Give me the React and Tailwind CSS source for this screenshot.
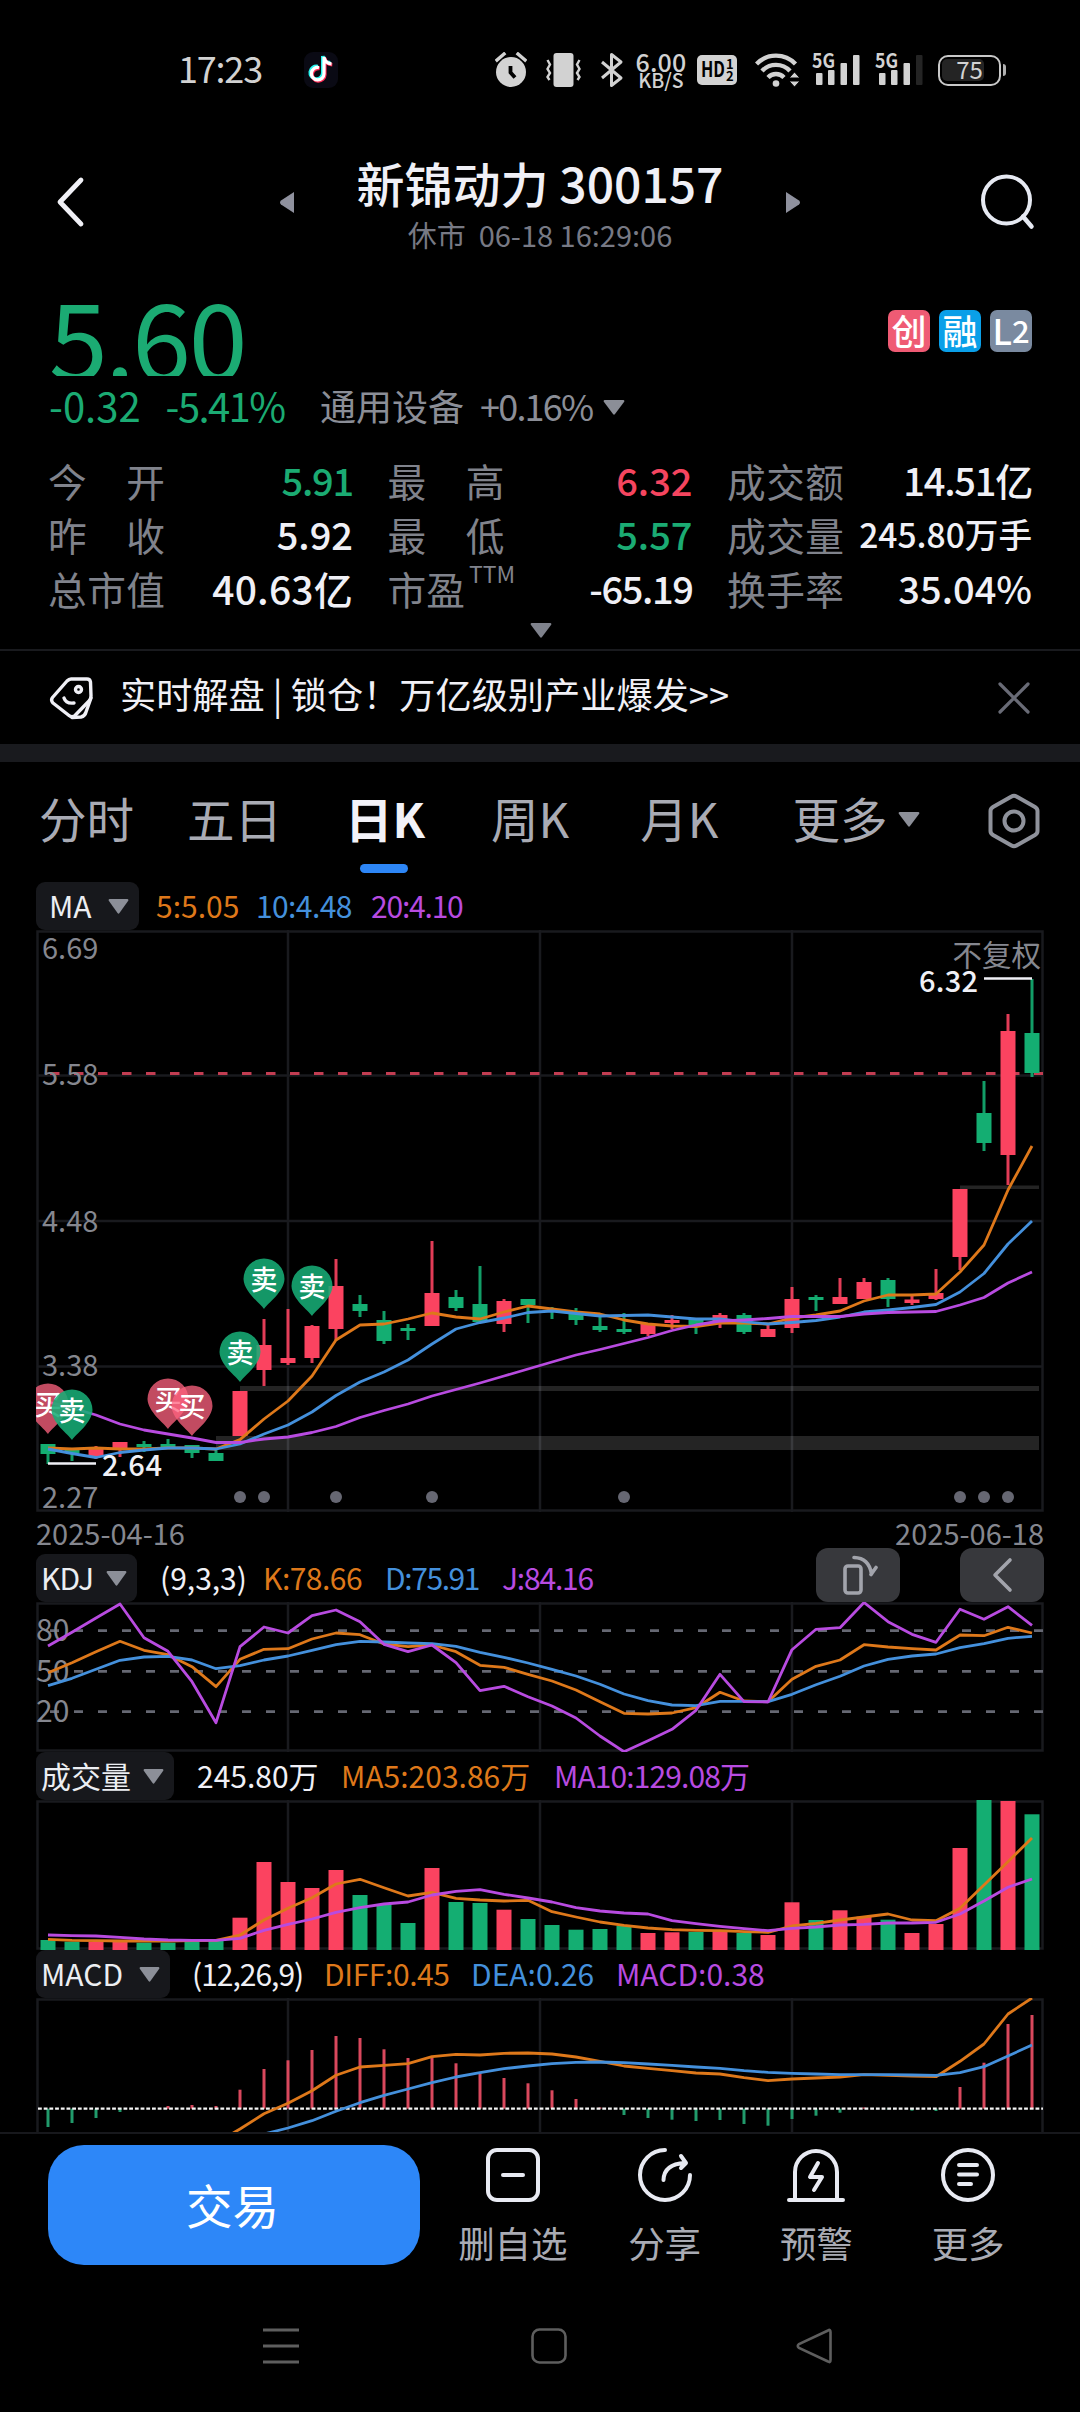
import React from 'react';
import { clsx } from 'clsx';

const RED = '#fb4360';
const GREEN = '#14ae72';
const ORANGE = '#de781a';
const BLUE = '#4490dc';
const PURPLE = '#b84be0';
const GRID = '#191a1e';
const MUTED = '#85878f';

// x position of the candle at index i
const cx = (i) => 48 + i * 24;

// --- DATA ---
// [up, wickTop, bodyTop, bodyBottom, wickBottom]
const candles = [
  [0, 514, 514, 524, 534], [0, 519, 520, 523, 531], [1, 516, 519, 526, 529], [1, 512, 512, 519, 527],
  [0, 511, 514, 517, 522], [0, 509, 514, 518, 519], [0, 515, 515, 523, 528], [0, 520, 523, 531, 531],
  [1, 461, 461, 506, 506], [1, 389, 415, 440, 456], [1, 379, 428, 433, 435], [1, 395, 396, 428, 433],
  [1, 329, 356, 399, 410], [0, 365, 374, 381, 387], [0, 381, 390, 411, 414], [0, 394, 398, 401, 410],
  [1, 311, 363, 396, 396], [0, 360, 367, 378, 381], [0, 336, 374, 392, 392], [1, 369, 371, 394, 402],
  [0, 369, 369, 375, 393], [0, 377, 380, 382, 389], [0, 378, 383, 390, 395], [0, 386, 396, 400, 402],
  [0, 383, 399, 402, 404], [1, 394, 394, 404, 406], [1, 385, 390, 393, 399], [0, 388, 388, 395, 404],
  [1, 383, 385, 394, 398], [0, 383, 385, 402, 404], [1, 394, 399, 407, 407], [1, 357, 369, 398, 403],
  [0, 365, 367, 370, 381], [1, 348, 367, 374, 374], [1, 348, 352, 369, 369], [0, 348, 350, 369, 377],
  [1, 366, 369.5, 373, 375], [1, 339, 363, 369, 370], [1, 259, 259, 327, 340], [0, 151, 183, 213, 221],
  [1, 84, 101, 225, 255], [0, 49, 103, 143, 147],
];

const ma5 = [518, 519, 518, 519, 519, 518, 518, 519, 509.6, 489, 471, 446, 410, 395, 394, 389, 383, 387, 389, 382, 376, 379, 382, 384, 390, 394, 396, 396.5, 393, 393, 394, 388, 385, 381, 371, 365, 365, 364, 342, 315, 260, 216];
const ma10 = [519, 523.5, 527.5, 522.5, 520, 518, 518, 519, 514, 504, 495, 482, 465.5, 452, 442, 430, 414, 399, 392.5, 388, 382.5, 381, 383.5, 386, 385.5, 385, 387, 389, 389, 391.6, 394, 392.5, 390.5, 387, 382, 380, 377.5, 374.5, 362, 343.5, 314, 291];
const ma20 = [472, 478, 485, 494, 500, 504, 508, 512.5, 512.5, 509, 507, 502.5, 496.5, 487.5, 480.5, 474, 466, 459.5, 453, 446, 439, 432, 425, 419.5, 413.5, 407.5, 400.5, 395, 391, 390, 388.5, 386.5, 386.5, 386.5, 384, 382.5, 382, 381.5, 375, 367.5, 353, 342];

const kLine = [70.7, 60.7, 49.7, 39.3, 48.3, 52.7, 64.7, 84.7, 57.3, 47.3, 46.7, 37, 31, 32.7, 42, 44.7, 43, 49.7, 63.3, 65.3, 72.3, 79, 88, 99.7, 111.3, 112, 111, 105.7, 90.3, 99, 99.7, 77.3, 64.3, 58, 42.7, 45, 46.7, 48, 33, 33.7, 25.3, 31];
const dLine = [83.7, 76.3, 67.3, 58.3, 55, 54.3, 58, 66.7, 63.7, 58, 54, 48.3, 42.7, 39.3, 40, 41, 41.7, 44.3, 50.3, 55.3, 61, 67.3, 74, 82.3, 92, 98.7, 103, 103.7, 99.3, 99.3, 99.7, 92.3, 82.7, 74.3, 64, 57.3, 54, 52, 45.7, 41.7, 36.3, 34.3];
const jLine = [44, 30.3, 16, 2, 35.7, 49.3, 79.7, 120.7, 44.7, 25, 31, 13.7, 8, 19.7, 42.3, 49.7, 43, 60.7, 88.7, 84.3, 94.7, 104, 116, 134, 149.7, 138.7, 127.3, 108.3, 72.3, 99.7, 100, 47.7, 27.3, 25.7, 0.5, 19.7, 32.3, 40.3, 7.3, 17.3, 4.7, 23.3];

// top edge of each volume bar
const volumes = [140, 141.7, 141.7, 141.7, 142.7, 142.7, 141.7, 140.7, 117.7, 62, 82, 88, 70, 95, 104.3, 123, 68, 102, 103, 109.7, 119, 125, 129.7, 129, 125.7, 133, 132.3, 132, 131, 133, 135, 102.3, 120, 110.3, 116.7, 119.7, 133, 124, 48, 0, 1, 14.3];
const volMa5 = [139.3, 140.3, 140.7, 141, 141, 141, 140.7, 140.3, 135, 120, 108.3, 97.7, 84, 79.3, 87.7, 96, 92.3, 98.3, 100, 101, 100.3, 111.7, 117, 122, 125.3, 128, 129.7, 130.3, 130.7, 131.7, 132.3, 126, 123.3, 120, 117, 114, 120, 120.7, 108.3, 85, 61.7, 38];
const volMa10 = [135, 135.7, 136, 137.3, 139, 140, 140.3, 140.3, 138.3, 130.3, 124.3, 119, 112.3, 107.7, 104, 102, 95, 91.3, 89.7, 94.3, 98, 102, 107.7, 111, 113, 114, 120.7, 123.7, 126.3, 128.7, 130.7, 128.3, 127, 125, 124.3, 123, 123, 122.3, 114, 101, 87.3, 79];

const ZERO = 110.7;
const macdBars = [129, 125, 120, 114, ZERO, 108, 107, 108, 91.7, 71, 62.3, 52, 38, 40, 51.3, 60, 59.3, 65.3, 75.3, 80, 85.3, 92.3, 101, 109.5, 117, 120, 121.7, 123, 122, 126, 127.7, 121, 117.7, 114.7, 109.5, 111.3, 112.7, 113, 89, 64.7, 26, 17];
const diffLine = [145, 131, 115.7, 105.3, 92.7, 77.3, 69, 67.3, 65.7, 58.7, 56.3, 57, 55.3, 55, 56, 59, 63.3, 68, 70.3, 72.7, 75, 76, 79.7, 82.7, 81, 80, 79, 76.7, 77.3, 78, 78.7, 63.3, 46, 16, 0];
const deaLine = [136, 130, 122.7, 113.3, 104.7, 97.3, 91, 84.7, 79, 74.7, 70.7, 68, 65.7, 64.3, 64, 64.7, 66, 67.3, 69, 70.3, 72.7, 74.3, 75.3, 76, 76.7, 76.7, 76.7, 77, 77.3, 74.7, 68.7, 58, 47];

const pins = [
  { i: 0, tip: 504, buy: true },
  { i: 1, tip: 510, buy: false },
  { i: 5, tip: 499, buy: true },
  { i: 6, tip: 506, buy: true },
  { i: 8, tip: 452, buy: false },
  { i: 9, tip: 379, buy: false },
  { i: 11, tip: 386, buy: false },
];

const up = 'text-[#f5455f]';
const down = 'text-[#1bab73]';
const plain = 'text-[#f0f0f6]';

const stats = [
  [
    { label: '今开', value: '5.91', className: `${down} tracking-[-1.200px]` },
    { label: '最高', value: '6.32', className: up },
    { label: '成交额', value: '14.51亿', className: `${plain} tracking-[-1.200px]` },
  ],
  [
    { label: '昨收', value: '5.92', className: plain },
    { label: '最低', value: '5.57', className: down },
    { label: '成交量', value: '245.80万手', className: `${plain} text-[33.600px]` },
  ],
  [
    { label: '总市值', value: '40.63亿', className: `${plain} text-[39px] tracking-[0.200px]` },
    { label: '市盈', value: '-65.19', className: `${plain} tracking-[-1.400px]` },
    { label: '换手率', value: '35.04%', className: plain },
  ],
];

// --- SHARED PIECES ---
const Line = ({ data, color, start = 0 }) => (
  <polyline
    points={data.map((y, i) => `${cx(i + start)},${y}`).join(' ')}
    fill="none"
    stroke={color}
    strokeWidth="2.8"
    strokeLinejoin="round"
  />
);

const Frame = ({ height, open }) => (
  <g stroke={GRID} strokeWidth="2.5" fill="none">
    {open ? <path d={`M37.5 ${height}V1.5H1042.5V${height}`} /> : <rect x="37.5" y="1.5" width="1005" height={height - 3} />}
    <path d={`M288 0V${height}M540 0V${height}M792 0V${height}`} />
  </g>
);

const Caret = ({ className = 'w-[21px] h-[15px] text-[#8c8f98]' }) => (
  <svg viewBox="0 0 22 15" className={className} preserveAspectRatio="none">
    <path d="M1.5 0H20.5Q22 .6 21 2L12 14Q11 15.300 10 14L1 2Q0 .6 1.500 0Z" fill="currentColor" />
  </svg>
);

const IndicatorBar = ({ name, width, children }) => (
  <div className="flex h-12 items-center whitespace-nowrap pl-[36px] text-[30px] leading-[48px]">
    <div className={clsx('flex h-12 shrink-0 items-center justify-between rounded-[9px] bg-[#17181c] pl-[5px] pr-[10px] text-[#eceef2]', width)}>
      <span className="-mt-[2px]">{name}</span>
      <Caret />
    </div>
    <div className="-mt-[2px] flex items-center">{children}</div>
  </div>
);

// --- STATUS BAR ---
const Signal = ({ dimLast }) => (
  <svg width="50" height="38" viewBox="0 0 50 38" fill="#d2d2d2" className="overflow-visible">
    <text x="0" y="17" fontSize="20" fontWeight="700" textLength="23" lengthAdjust="spacingAndGlyphs">5G</text>
    <rect x="4" y="22" width="6.500" height="12" rx="1" />
    <rect x="16" y="19" width="6.500" height="15" rx="1" />
    <rect x="28.500" y="12" width="6.500" height="22" rx="1" />
    <rect x="41" y="4" width="6.500" height="30" rx="1" fill={dimLast ? '#242424' : '#d2d2d2'} />
  </svg>
);

const StatusBar = () => (
  <div className="flex h-[140px] items-center pl-[178px] text-[#d2d2d2]">
    <span className="w-[85px] -mt-[6px] text-[36px] leading-none tracking-[-1.2px]">17:23</span>
    <svg className="ml-[41px]" width="34" height="36" viewBox="0 0 34 36">
      <rect width="34" height="36" rx="9" fill="#0a0a14" />
      <g fill="none" strokeWidth="3.600">
        <path d="M15 15.500a6.300 6.300 0 1 0 5 6.200V5c.6 4 3.500 6.500 7.500 6.800" stroke="#25f4ee" transform="translate(-1.200 -1)" />
        <path d="M15 15.500a6.300 6.300 0 1 0 5 6.200V5c.6 4 3.500 6.500 7.500 6.800" stroke="#fe2c55" transform="translate(.8 1)" />
        <path d="M15 15.500a6.300 6.300 0 1 0 5 6.200V5c.6 4 3.500 6.500 7.500 6.800" stroke="#fff" strokeWidth="3.200" />
      </g>
    </svg>
    <svg className="ml-[157px]" width="32" height="36" viewBox="0 0 32 36">
      <path d="M2 8 9 2M30 8 23 2" stroke="#d2d2d2" strokeWidth="3.400" strokeLinecap="square" />
      <circle cx="16" cy="20" r="15" fill="#d2d2d2" />
      <path d="M15.500 14v6.500l4.500 5" stroke="#000" strokeWidth="3.800" fill="none" />
    </svg>
    <svg className="ml-[19px]" width="35" height="36" viewBox="0 0 35 36">
      <rect x="7.500" y="1" width="20" height="34" rx="3" fill="#d2d2d2" />
      <path d="M1.500 8 4 12.500 1.500 17 4 21 1.500 25 3.500 28M33.500 8 31 12.500l2.500 4.500L31 21l2.500 4-2 3" fill="none" stroke="#d2d2d2" strokeWidth="2.400" />
    </svg>
    <svg className="ml-[19px]" width="24" height="36" viewBox="0 0 24 36">
      <path d="M2 10 21 26 11.500 33.500V2.500l9.500 7.500L2 26" fill="none" stroke="#d2d2d2" strokeWidth="3" strokeLinejoin="round" />
    </svg>
    <div className="ml-[10px] flex w-[54px] flex-col items-center font-medium">
      <span className="text-[25px] leading-[20px] tracking-[0.2px]">6.00</span>
      <span className="text-[19.500px] leading-[18px]">KB/S</span>
    </div>
    <svg className="ml-[9px]" width="40" height="30" viewBox="0 0 40 30">
      <rect width="40" height="30" rx="5" fill="#d2d2d2" />
      <g fill="#000" fontWeight="700">
        <text x="4" y="22" fontSize="21" textLength="24" lengthAdjust="spacingAndGlyphs">HD</text>
        <text x="29" y="14" fontSize="13">1</text>
        <text x="29" y="26" fontSize="13">2</text>
      </g>
    </svg>
    <svg className="ml-[18px]" width="46" height="36" viewBox="0 0 46 36">
      <g fill="none" stroke="#d2d2d2" strokeWidth="4.400">
        <path d="M1.500 12a27 27 0 0 1 39 0" />
        <path d="M7 19a19 19 0 0 1 28 0" />
        <path d="M13 25.500a11 11 0 0 1 16 0" />
      </g>
      <circle cx="21" cy="31.500" r="3.300" fill="#d2d2d2" />
      <path d="M39.500 20l5.500 6H34zM39.500 35l-5.500-6h11z" fill="#d2d2d2" stroke="#000" strokeWidth="1" />
    </svg>
    <div className="ml-[11px] flex gap-[13px]">
      <Signal />
      <Signal dimLast />
    </div>
    <div className="ml-[13px] flex items-center gap-[2px]">
      <div className="relative flex h-[31px] w-[63px] items-center justify-center rounded-[10px] border-[2.500px] border-[#c8c8c8]">
        <div className="absolute left-[2px] top-[2px] h-[22px] w-[42px] rounded-[5px] bg-[#242424]" />
        <span className="relative -mt-[2px] text-[24px] leading-none">75</span>
      </div>
      <div className="h-[12px] w-[3px] rounded-r bg-[#b0b0b0]" />
    </div>
  </div>
);

// --- HEADER ---
const Header = () => (
  <div className="flex h-[124px] items-center pl-[55px]">
    <svg width="30" height="52" viewBox="0 0 30 52">
      <path d="M26 4 5 26l21 22" fill="none" stroke="#f0f0f6" strokeWidth="4.800" strokeLinecap="round" strokeLinejoin="round" />
    </svg>
    <div className="ml-[195px] flex w-[520px] items-center justify-between">
      <svg width="14" height="21" viewBox="0 0 14 21"><path d="M14 0v21L1 12.500q-2-2 0-4z" fill="#8f919e" /></svg>
      <div className="flex flex-col items-center gap-[4px] pb-[1px]">
        <h1 className="whitespace-nowrap text-[48px] font-medium leading-[60px] text-[#f0f0f6]">新锦动力 300157</h1>
        <p className="whitespace-pre text-[29px] leading-[36px] text-[#777984]">休市  06-18 16:29:06</p>
      </div>
      <svg width="14" height="21" viewBox="0 0 14 21"><path d="M0 0v21l13-8.500q2-2 0-4z" fill="#8f919e" /></svg>
    </div>
    <svg className="ml-auto mr-[43px]" width="58" height="58" viewBox="0 0 58 58">
      <circle cx="27.500" cy="27" r="23.500" fill="none" stroke="#e6e9f2" strokeWidth="4" />
      <path d="M44 43.500 52.500 53.500" stroke="#e6e9f2" strokeWidth="4.500" strokeLinecap="round" />
    </svg>
  </div>
);

// --- QUOTE ---
const Badge = ({ children, className }) => (
  <span className={clsx('flex h-[42px] w-[42px] items-center justify-center rounded-[7px] pb-[3px] text-[35px] font-medium leading-none text-white', className)}>
    {children}
  </span>
);

const StatLabel = ({ text }) => (
  <span className="-ml-[1px] flex w-[117px] shrink-0 justify-between text-[38.700px] text-[#80838c]">
    {text === '市盈' ? (
      <span className="flex whitespace-nowrap">
        市盈<span className="-mt-[15px] ml-[4px] text-[23px]">TTM</span>
      </span>
    ) : (
      text.split('').map((c, i) => <span key={i}>{c}</span>)
    )}
  </span>
);

const Quote = () => (
  <div className="pl-[49px] pr-[48px] pt-[26px]">
    <div className="flex h-[86px] justify-between">
      <div className="h-[86px] overflow-hidden text-[106px] leading-[90px] tracking-[-2.500px] text-[#1bab73]">5.60</div>
      <div className="flex gap-[9px] pt-[20px]">
        <Badge className="bg-[#ef5b74]">创</Badge>
        <Badge className="bg-[#0a9fe8]">融</Badge>
        <Badge className="bg-[#7a8aa0]">L<span className="text-[31px]">2</span></Badge>
      </div>
    </div>
    <div className="flex h-[58px] items-center whitespace-nowrap">
      <div className="flex w-[271px] gap-[25px] text-[40px] leading-[56px] text-[#1bab73]">
        <span>-0.32</span>
        <span className="tracking-[-1.600px]">-5.41%</span>
      </div>
      <div className="flex items-center text-[36px] leading-[56px] text-[#8b8e97]">
        <span>通用设备</span>
        <span className="ml-[16px] tracking-[-1.800px]">+0.16%</span>
        <Caret className="ml-[11px] mt-[4px] h-[15px] w-[22px] text-[#8b8e97]" />
      </div>
    </div>
    <div className="pt-[19px]">
      {stats.map((row) => (
        <div key={row[0].label} className="flex h-[54px] items-center gap-[35.500px] text-[38px] leading-[54px]">
          {row.map((s) => (
            <div key={s.label} className="flex w-[304px]">
              <StatLabel text={s.label} />
              <span className={clsx('flex-1 whitespace-nowrap text-right font-medium leading-[54px]', s.className)}>{s.value}</span>
            </div>
          ))}
        </div>
      ))}
    </div>
    <div className="flex h-[34px] justify-center pt-[8px]">
      <Caret className="h-[15px] w-[22px] text-[#7f828c]" />
    </div>
  </div>
);

const Notice = () => (
  <div className="flex h-[95px] items-center border-t-2 border-[#191a1e] pl-[49px] pr-[50px]">
    <svg width="44" height="44" viewBox="0 0 44 44" fill="none" stroke="#f0f0f6" strokeWidth="3.400" strokeLinejoin="round" strokeLinecap="round">
      <path d="M22 3 38 3Q41 3 41.500 6L42 20Q42 23 40 25L26 39.500Q23 42 20 39.500L4 27Q1.500 24.500 3.500 21.500L18 5Q20 3 22 3Z" />
      <path d="M42 22 37 36Q36 40 32 41L23 41.500" />
      <circle cx="29.500" cy="13.500" r="3" />
      <path d="M15 22q2 6 10 5" />
    </svg>
    <span className="-mt-[8px] ml-[27px] whitespace-nowrap text-[36.200px] text-[#f0f0f6]">实时解盘 | 锁仓！万亿级别产业爆发&gt;&gt;</span>
    <svg className="ml-auto" width="32" height="32" viewBox="0 0 32 32">
      <path d="M2 2 30 30M30 2 2 30" stroke="#696b76" strokeWidth="3.200" strokeLinecap="round" />
    </svg>
  </div>
);

const Tab = ({ children, active, className }) => (
  <div className={clsx('flex flex-col items-center', className)}>
    <span className={clsx('whitespace-nowrap text-[47.500px] leading-[60px]', active ? 'font-bold text-[#f2f2f8]' : 'text-[#a9abb4]')}>{children}</span>
    {active && <span className="mr-[3px] mt-[16px] h-[9px] w-[48px] rounded-full bg-[#2d86f6]" />}
  </div>
);

const Tabs = () => (
  <div className="flex h-[120px] items-start pl-[39px] pt-[26px]">
    <Tab>分时</Tab>
    <Tab className="ml-[53px]">五日</Tab>
    <Tab active className="ml-[63px]">日K</Tab>
    <Tab className="ml-[66px]">周K</Tab>
    <Tab className="ml-[71px]">月K</Tab>
    <Tab className="ml-[74px]">更多</Tab>
    <Caret className="ml-[11px] mt-[24px] h-[15px] w-[22px] text-[#8c8f98]" />
    <svg className="ml-auto mr-[40px] mt-[5px]" width="52" height="56" viewBox="0 0 52 56" fill="none" stroke="#8f929b" strokeWidth="4">
      <path d="M23.500 3.500Q26 2 28.500 3.500L47 14Q49.500 15.500 49.500 18V38Q49.500 40.500 47 42L28.500 52.500Q26 54 23.500 52.500L5 42Q2.500 40.500 2.500 38V18Q2.500 15.500 5 14Z" />
      <circle cx="26" cy="28" r="9.500" />
    </svg>
  </div>
);

// --- CHARTS ---
const Pin = ({ i, tip, buy }) => (
  <g transform={`translate(${cx(i)} ${tip})`}>
    <path
      d="M0 0C-4-6-20-17-20.500-30A20.500 20.500 0 0 1 20.500-30C20-17 4-6 0 0Z"
      fill={buy ? '#ff637f' : '#17ae76'}
      fillOpacity={buy ? 0.76 : 0.87}
    />
    <text y="-19" fontSize="27" fontWeight="500" fill="#fff" textAnchor="middle">{buy ? '买' : '卖'}</text>
  </g>
);

const KChart = () => (
  <svg width="1080" height="582" viewBox="0 0 1080 582" className="block">
    <defs>
      <clipPath id="plot"><rect x="36" y="0" width="1008" height="582" /></clipPath>
    </defs>
    <Frame height={582} />
    <path d="M37 145.500H1043M37 291H1043M37 436.500H1043" stroke={GRID} strokeWidth="2.600" />
    <g fill="#fff" fillOpacity="0.14">
      <rect x="240" y="456" width="799" height="5" />
      <rect x="216" y="506" width="823" height="14" />
      <rect x="960" y="255.500" width="79" height="3.500" />
    </g>
    <path d="M50 143.500H1043" stroke="#c23d52" strokeWidth="3" strokeDasharray="9.500 14.500" />
    <g fontSize="29" fill={MUTED}>
      <text x="42" y="29">6.69</text>
      <text x="42" y="155">5.58</text>
      <text x="42" y="302">4.48</text>
      <text x="42" y="446">3.38</text>
      <text x="42" y="578">2.27</text>
      <text x="1041" y="36" textAnchor="end" fontSize="29.500">不复权</text>
    </g>
    {candles.map(([rise, wt, bt, bb, wb], i) => (
      <g key={i} fill={rise ? RED : GREEN}>
        <rect x={cx(i) - 1.500} y={wt} width="3" height={wb - wt} fillOpacity="0.9" />
        <rect x={cx(i) - 7.500} y={bt} width="15" height={bb - bt} />
      </g>
    ))}
    <Line data={ma5} color={ORANGE} />
    <Line data={ma10} color={BLUE} />
    <Line data={ma20} color={PURPLE} />
    <g clipPath="url(#plot)">
      {pins.map((p) => <Pin key={p.i} {...p} />)}
    </g>
    {[8, 9, 12, 16, 24, 38, 39, 40].map((i) => (
      <circle key={i} cx={cx(i)} cy="567" r="6" fill="#666772" />
    ))}
    <path d="M48 533.500H96M984 48.500H1032" stroke="#f0f0f6" strokeWidth="2.600" />
    <g fontSize="29" fontWeight="500" fill="#f0f0f6">
      <text x="102" y="546" textLength="60">2.64</text>
      <text x="919" y="62" textLength="59">6.32</text>
    </g>
  </svg>
);

const KdjChart = () => (
  <svg width="1080" height="150" viewBox="0 0 1080 150" className="block">
    <Frame height={150} />
    <path d="M50 28.700H1043M50 69.300H1043M50 109.700H1043" stroke="#666873" strokeWidth="2.800" strokeDasharray="9 15" />
    <g fontSize="30" fill={MUTED}>
      <text x="36" y="39">80</text>
      <text x="36" y="80">50</text>
      <text x="36" y="120">20</text>
    </g>
    <Line data={kLine} color={ORANGE} />
    <Line data={dLine} color={BLUE} />
    <Line data={jLine} color={PURPLE} />
  </svg>
);

const VolumeChart = () => (
  <svg width="1080" height="150" viewBox="0 0 1080 150" className="block">
    <Frame height={150} />
    {volumes.map((y, i) => (
      <rect key={i} x={cx(i) - 7.500} y={y} width="15" height={150 - y} fill={candles[i][0] ? RED : GREEN} />
    ))}
    <Line data={volMa5} color={ORANGE} />
    <Line data={volMa10} color={PURPLE} />
  </svg>
);

const MacdChart = () => (
  <svg width="1080" height="134" viewBox="0 0 1080 134" className="block">
    <Frame height={134} open />
    {macdBars.map((y, i) => (
      <rect
        key={i}
        x={cx(i) - 1.500}
        y={Math.min(y, ZERO)}
        width="3"
        height={Math.abs(y - ZERO)}
        fill={y < ZERO ? '#d9485d' : '#219a6b'}
      />
    ))}
    <path d="M38 110.700H1043" stroke="#f4f4f4" strokeWidth="2.200" strokeDasharray="3.800 1.900" />
    <Line data={diffLine} color={ORANGE} start={7} />
    <Line data={deaLine} color={BLUE} start={9} />
  </svg>
);

const ChartTools = () => (
  <div className="absolute right-[36px] top-[36px] flex gap-[60px]">
    <div className="flex h-[54px] w-[84px] items-center justify-center rounded-[12px] bg-[#37383c]">
      <svg width="40" height="42" viewBox="0 0 40 42" fill="none" stroke="#a2a4ac" strokeWidth="3.600" strokeLinecap="round" strokeLinejoin="round">
        <rect x="7" y="12" width="16" height="27" rx="3" />
        <path d="M16 3.500Q31 4 33.500 20M33 20.500 38 13.500" />
      </svg>
    </div>
    <div className="flex h-[54px] w-[84px] items-center justify-center rounded-[12px] bg-[#37383c]">
      <svg width="22" height="36" viewBox="0 0 22 36">
        <path d="M19 3 4 18l15 15" fill="none" stroke="#a2a4ac" strokeWidth="3.600" strokeLinecap="round" strokeLinejoin="round" />
      </svg>
    </div>
  </div>
);

// --- BOTTOM ---
const Action = ({ label, children }) => (
  <div className="flex flex-1 flex-col items-center">
    <svg width="60" height="58" viewBox="0 0 60 58" fill="none" stroke="#e8eaf2" strokeWidth="4" strokeLinecap="round" strokeLinejoin="round">
      {children}
    </svg>
    <span className="mt-[12px] text-[36.500px] leading-[54px] text-[#a9abb4]">{label}</span>
  </div>
);

const ActionBar = () => (
  <div className="flex h-[150px] border-t-2 border-[#17181c] pl-[48px] pr-[36px] pt-[11px]">
    <button className="h-[120px] w-[372px] rounded-[36px] bg-[#2d87f8] pb-[2px] pr-[3px] text-[46.500px] text-white">交易</button>
    <div className="ml-[17px] flex flex-1 pt-[1px]">
      <Action label="删自选">
        <rect x="5" y="4" width="50" height="50" rx="9" />
        <path d="M20 29H40" />
      </Action>
      <Action label="分享">
        <path d="M30 4A25 25 0 1 0 55 29" />
        <path d="M28.500 34Q29 18 50 17M46 10 51 17 46 22" />
      </Action>
      <Action label="预警">
        <path d="M9 53V26a21 21 0 0 1 42 0V53M3 54H57" />
        <path d="M32 17 24 31H36L28 44" />
      </Action>
      <Action label="更多">
        <circle cx="30" cy="29" r="25" />
        <path d="M21 19H39M21 28.500H39M21 38H33" />
      </Action>
    </div>
  </div>
);

const SystemNav = () => (
  <div className="flex items-start pl-[263px] pt-[45px]">
    <svg width="36" height="38" viewBox="0 0 36 38">
      <path d="M0 3H36M0 19H36M0 35H36" stroke="#5e5e5e" strokeWidth="2.800" />
    </svg>
    <svg className="ml-[231px]" width="38" height="38" viewBox="0 0 38 38">
      <rect x="2.500" y="2.500" width="33" height="33" rx="7" fill="none" stroke="#5e5e5e" strokeWidth="2.600" />
    </svg>
    <svg className="ml-[227px]" width="38" height="38" viewBox="0 0 38 38">
      <path d="M33 3.500Q35.500 1.800 35.500 5V33Q35.500 36.200 33 34.500L4 21Q1.500 19 4 17Z" fill="none" stroke="#5e5e5e" strokeWidth="2.600" />
    </svg>
  </div>
);

export default function App() {
  return (
    <div className="h-[2412px] w-[1080px] overflow-hidden bg-black font-['Noto_Sans_CJK_SC',sans-serif]">
      <StatusBar />
      <Header />
      <Quote />
      <Notice />
      <div className="h-[18px] bg-[#191a1e]" />
      <Tabs />

      <IndicatorBar name={<span className="pl-[8px]">MA</span>} width="w-[103px]">
        <span className="ml-[17px] w-[100px] text-[#de781a]">5:5.05</span>
        <span className="w-[115px] tracking-[-0.600px] text-[#4490dc]">10:4.48</span>
        <span className="tracking-[-1.200px] text-[#b84be0]">20:4.10</span>
      </IndicatorBar>
      <KChart />

      <div className="relative">
        <div className="flex h-[42px] items-center justify-between px-[36px] text-[29px] text-[#85878f]">
          <span>2025-04-16</span>
          <span>2025-06-18</span>
        </div>
        <IndicatorBar name={<span className="tracking-[-0.800px]">KDJ</span>} width="w-[101px]">
          <span className="ml-[23px] w-[103px] text-[#f0f0f6]">(9,3,3)</span>
          <span className="w-[122px] tracking-[-0.500px] text-[#de781a]">K:78.66</span>
          <span className="w-[117px] tracking-[-1.400px] text-[#4490dc]">D:75.91</span>
          <span className="tracking-[-1.200px] text-[#b84be0]">J:84.16</span>
        </IndicatorBar>
        <ChartTools />
      </div>
      <KdjChart />

      <IndicatorBar name="成交量" width="w-[138px]">
        <span className="ml-[23px] w-[144px] text-[#f0f0f6]">245.80万</span>
        <span className="w-[213px] text-[#de781a]">MA5:203.86万</span>
        <span className="tracking-[-0.900px] text-[#b84be0]">MA10:129.08万</span>
      </IndicatorBar>
      <VolumeChart />

      <IndicatorBar name="MACD" width="w-[134px]">
        <span className="ml-[22px] w-[132px] tracking-[-1px] text-[#f0f0f6]">(12,26,9)</span>
        <span className="w-[147px] tracking-[-0.400px] text-[#de781a]">DIFF:0.45</span>
        <span className="w-[145px] text-[#4490dc]">DEA:0.26</span>
        <span className="text-[#b84be0]">MACD:0.38</span>
      </IndicatorBar>
      <MacdChart />

      <ActionBar />
      <SystemNav />
    </div>
  );
}
